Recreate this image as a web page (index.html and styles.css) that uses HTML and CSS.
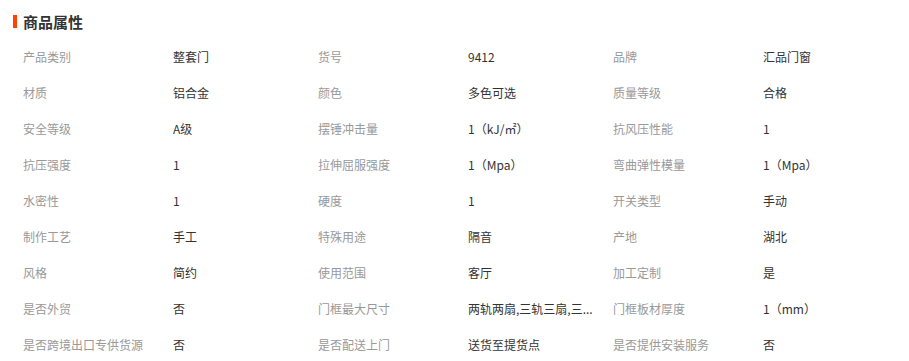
FILE: index.html
```html
<!DOCTYPE html>
<html lang="zh-CN">
<head>
<meta charset="utf-8">
<title>商品属性</title>
<link rel="stylesheet" href="styles.css">
</head>
<body>
<section class="attrs">
  <h2 class="attrs-title">商品属性</h2>
  <div class="attrs-grid">
    <div class="k">产品类别</div><div class="v">整套门</div>
    <div class="k">货号</div><div class="v">9412</div>
    <div class="k">品牌</div><div class="v">汇品门窗</div>

    <div class="k">材质</div><div class="v">铝合金</div>
    <div class="k">颜色</div><div class="v">多色可选</div>
    <div class="k">质量等级</div><div class="v">合格</div>

    <div class="k">安全等级</div><div class="v">A级</div>
    <div class="k">摆锤冲击量</div><div class="v">1（kJ/㎡）</div>
    <div class="k">抗风压性能</div><div class="v">1</div>

    <div class="k">抗压强度</div><div class="v">1</div>
    <div class="k">拉伸屈服强度</div><div class="v">1（Mpa）</div>
    <div class="k">弯曲弹性模量</div><div class="v">1（Mpa）</div>

    <div class="k">水密性</div><div class="v">1</div>
    <div class="k">硬度</div><div class="v">1</div>
    <div class="k">开关类型</div><div class="v">手动</div>

    <div class="k">制作工艺</div><div class="v">手工</div>
    <div class="k">特殊用途</div><div class="v">隔音</div>
    <div class="k">产地</div><div class="v">湖北</div>

    <div class="k">风格</div><div class="v">简约</div>
    <div class="k">使用范围</div><div class="v">客厅</div>
    <div class="k">加工定制</div><div class="v">是</div>

    <div class="k">是否外贸</div><div class="v">否</div>
    <div class="k">门框最大尺寸</div><div class="v">两轨两扇,三轨三扇,三...</div>
    <div class="k">门框板材厚度</div><div class="v">1（mm）</div>

    <div class="k">是否跨境出口专供货源</div><div class="v">否</div>
    <div class="k">是否配送上门</div><div class="v">送货至提货点</div>
    <div class="k">是否提供安装服务</div><div class="v">否</div>
  </div>
</section>
</body>
</html>
```

FILE: styles.css
```css
html, body {
  margin: 0;
  padding: 0;
  background: #fff;
}
body {
  font-family: "Noto Sans CJK SC", "Liberation Sans", sans-serif;
  font-size: 12px;
  color: #333;
}
.attrs {
  padding: 0 0 0 13px;
}
.attrs-title {
  margin: 0;
  height: 39px;
  display: flex;
  align-items: center;
  gap: 6px;
  font-size: 15px;
  font-weight: bold;
  color: #333;
  padding-top: 3px;
  box-sizing: border-box;
}
.attrs-title::before {
  content: "";
  width: 4px;
  height: 13px;
  background: #ff4400;
}
.attrs-grid {
  display: grid;
  grid-template-columns: 150px 145px 150px 145px 150px 145px;
  grid-auto-rows: 36px;
  padding-left: 10px;
}
.k, .v {
  line-height: 36px;
  white-space: nowrap;
  overflow: hidden;
}
.k {
  color: #999;
}
.v {
  color: #333;
  max-width: 140px;
  text-overflow: ellipsis;
}
```
